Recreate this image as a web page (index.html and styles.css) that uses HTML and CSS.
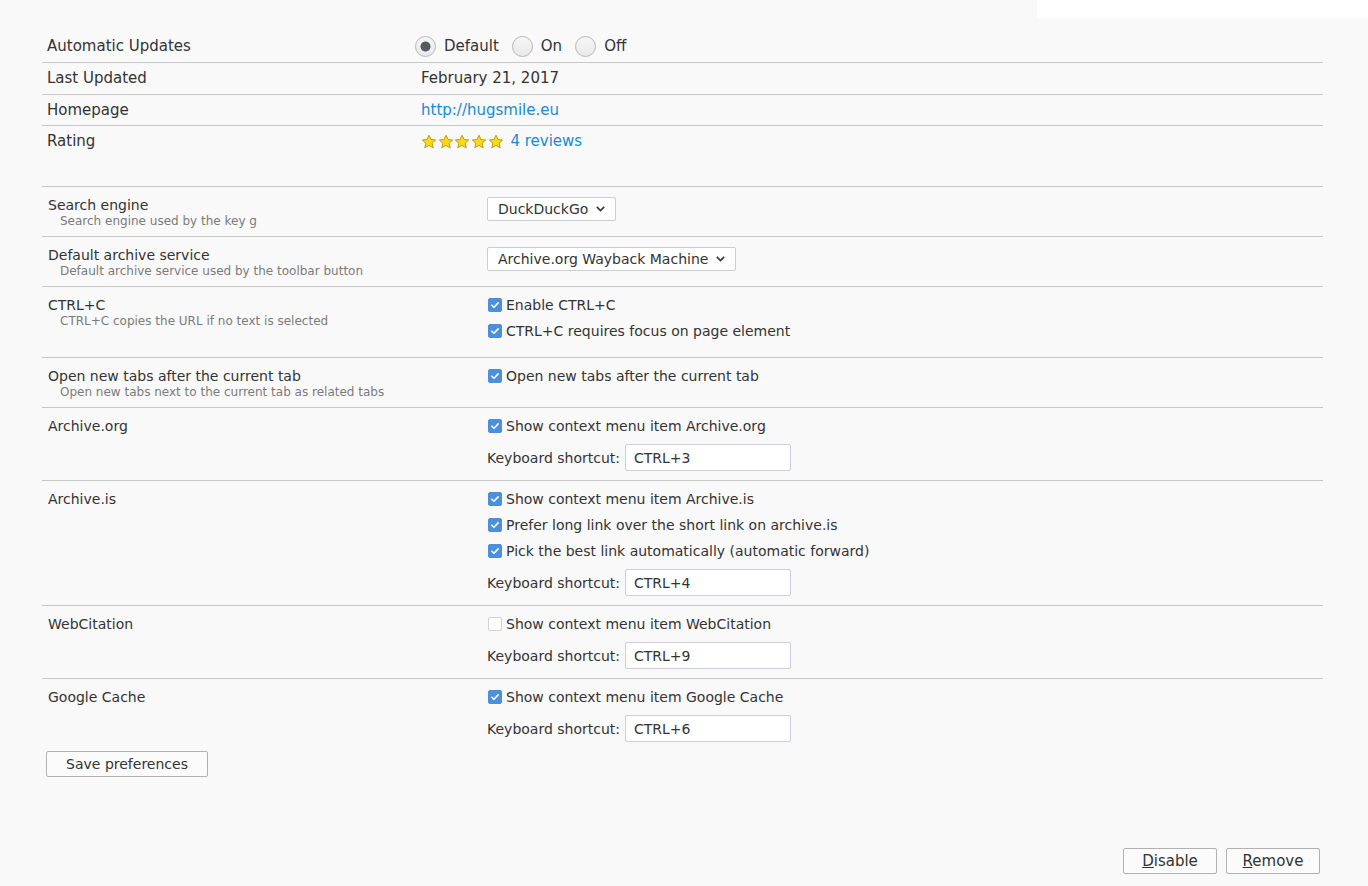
FILE: index.html
```html
<!DOCTYPE html>
<html lang="en">
<head>
<meta charset="utf-8">
<title>Add-on details</title>
<link rel="stylesheet" href="styles.css">
</head>
<body>
<div class="topbar"></div>
<main class="page">
  <section class="details">
    <div class="drow">
      <div class="dlabel">Automatic Updates</div>
      <div class="dvalue radios">
        <label class="radio-item"><input type="radio" name="upd" class="radio" checked>Default</label>
        <label class="radio-item"><input type="radio" name="upd" class="radio">On</label>
        <label class="radio-item"><input type="radio" name="upd" class="radio">Off</label>
      </div>
    </div>
    <div class="drow">
      <div class="dlabel">Last Updated</div>
      <div class="dvalue">February 21, 2017</div>
    </div>
    <div class="drow short">
      <div class="dlabel">Homepage</div>
      <div class="dvalue"><a class="link" href="#">http://hugsmile.eu</a></div>
    </div>
    <div class="drow last">
      <div class="dlabel">Rating</div>
      <div class="dvalue rating">
        <span class="stars">
          <svg class="star" viewBox="0 0 16 16"><path d="M8 1.2l2 4.3 4.7.5-3.5 3.2 1 4.6L8 11.4l-4.2 2.4 1-4.6L1.3 6l4.7-.5z"/></svg>
          <svg class="star" viewBox="0 0 16 16"><path d="M8 1.2l2 4.3 4.7.5-3.5 3.2 1 4.6L8 11.4l-4.2 2.4 1-4.6L1.3 6l4.7-.5z"/></svg>
          <svg class="star" viewBox="0 0 16 16"><path d="M8 1.2l2 4.3 4.7.5-3.5 3.2 1 4.6L8 11.4l-4.2 2.4 1-4.6L1.3 6l4.7-.5z"/></svg>
          <svg class="star" viewBox="0 0 16 16"><path d="M8 1.2l2 4.3 4.7.5-3.5 3.2 1 4.6L8 11.4l-4.2 2.4 1-4.6L1.3 6l4.7-.5z"/></svg>
          <svg class="star" viewBox="0 0 16 16"><path d="M8 1.2l2 4.3 4.7.5-3.5 3.2 1 4.6L8 11.4l-4.2 2.4 1-4.6L1.3 6l4.7-.5z"/></svg>
        </span>
        <a class="link" href="#">4 reviews</a>
      </div>
    </div>
  </section>

  <section class="options">
    <div class="orow">
      <div class="olabel">
        <div class="otitle">Search engine</div>
        <div class="odesc">Search engine used by the key g</div>
      </div>
      <div class="ocontrols">
        <span class="select-wrap">
          <select class="select"><option>DuckDuckGo</option></select>
          <svg class="chevron" viewBox="0 0 9 6"><path d="M0.8 0.8L4.5 4.5 8.2 0.8"/></svg>
        </span>
      </div>
    </div>

    <div class="orow">
      <div class="olabel">
        <div class="otitle">Default archive service</div>
        <div class="odesc">Default archive service used by the toolbar button</div>
      </div>
      <div class="ocontrols">
        <span class="select-wrap">
          <select class="select"><option>Archive.org Wayback Machine</option></select>
          <svg class="chevron" viewBox="0 0 9 6"><path d="M0.8 0.8L4.5 4.5 8.2 0.8"/></svg>
        </span>
      </div>
    </div>

    <div class="orow tall">
      <div class="olabel">
        <div class="otitle">CTRL+C</div>
        <div class="odesc">CTRL+C copies the URL if no text is selected</div>
      </div>
      <div class="ocontrols">
        <label class="check"><span class="box on"><svg viewBox="0 0 14 14"><path d="M3.3 7.2l2.5 2.5 4.9-5.2"/></svg></span>Enable CTRL+C</label>
        <label class="check"><span class="box on"><svg viewBox="0 0 14 14"><path d="M3.3 7.2l2.5 2.5 4.9-5.2"/></svg></span>CTRL+C requires focus on page element</label>
      </div>
    </div>

    <div class="orow">
      <div class="olabel">
        <div class="otitle">Open new tabs after the current tab</div>
        <div class="odesc">Open new tabs next to the current tab as related tabs</div>
      </div>
      <div class="ocontrols">
        <label class="check"><span class="box on"><svg viewBox="0 0 14 14"><path d="M3.3 7.2l2.5 2.5 4.9-5.2"/></svg></span>Open new tabs after the current tab</label>
      </div>
    </div>

    <div class="orow">
      <div class="olabel">
        <div class="otitle">Archive.org</div>
      </div>
      <div class="ocontrols">
        <label class="check"><span class="box on"><svg viewBox="0 0 14 14"><path d="M3.3 7.2l2.5 2.5 4.9-5.2"/></svg></span>Show context menu item Archive.org</label>
        <div class="shortcut"><span>Keyboard shortcut:</span><input class="text" type="text" value="CTRL+3"></div>
      </div>
    </div>

    <div class="orow">
      <div class="olabel">
        <div class="otitle">Archive.is</div>
      </div>
      <div class="ocontrols">
        <label class="check"><span class="box on"><svg viewBox="0 0 14 14"><path d="M3.3 7.2l2.5 2.5 4.9-5.2"/></svg></span>Show context menu item Archive.is</label>
        <label class="check"><span class="box on"><svg viewBox="0 0 14 14"><path d="M3.3 7.2l2.5 2.5 4.9-5.2"/></svg></span>Prefer long link over the short link on archive.is</label>
        <label class="check"><span class="box on"><svg viewBox="0 0 14 14"><path d="M3.3 7.2l2.5 2.5 4.9-5.2"/></svg></span>Pick the best link automatically (automatic forward)</label>
        <div class="shortcut"><span>Keyboard shortcut:</span><input class="text" type="text" value="CTRL+4"></div>
      </div>
    </div>

    <div class="orow">
      <div class="olabel">
        <div class="otitle">WebCitation</div>
      </div>
      <div class="ocontrols">
        <label class="check"><span class="box"></span>Show context menu item WebCitation</label>
        <div class="shortcut"><span>Keyboard shortcut:</span><input class="text" type="text" value="CTRL+9"></div>
      </div>
    </div>

    <div class="orow">
      <div class="olabel">
        <div class="otitle">Google Cache</div>
      </div>
      <div class="ocontrols">
        <label class="check"><span class="box on"><svg viewBox="0 0 14 14"><path d="M3.3 7.2l2.5 2.5 4.9-5.2"/></svg></span>Show context menu item Google Cache</label>
        <div class="shortcut"><span>Keyboard shortcut:</span><input class="text" type="text" value="CTRL+6"></div>
      </div>
    </div>
  </section>

  <div class="save-row"><button class="btn save">Save preferences</button></div>

  <footer class="footer">
    <button class="btn big"><u>D</u>isable</button>
    <button class="btn big"><u>R</u>emove</button>
  </footer>
</main>
</body>
</html>
```

FILE: styles.css
```css
html, body {
  margin: 0;
  padding: 0;
}

body {
  background: #f9f9f9;
  color: #333333;
  font-family: "DejaVu Sans", "Liberation Sans", sans-serif;
  min-height: 100vh;
  display: flex;
  flex-direction: column;
  box-sizing: border-box;
}

.topbar {
  align-self: flex-end;
  width: 331px;
  height: 18px;
  background: #ffffff;
}

.page {
  flex: 1;
  display: flex;
  flex-direction: column;
  padding: 13px 45px 12px 42px;
}

/* top details table */
.details {
  font-size: 15px;
}

.drow {
  display: grid;
  grid-template-columns: 374px 1fr;
  align-items: center;
  min-height: 31px;
  padding-left: 5px;
  border-bottom: 1px solid #c6c6c6;
  line-height: 19px;
}

.drow.short {
  min-height: 30px;
}

.drow.last {
  border-bottom: none;
  padding-top: 0;
}

.dvalue {
  display: flex;
  align-items: center;
}

.radios {
  margin-left: -6px;
}

.radio-item {
  display: inline-flex;
  align-items: center;
  margin-right: 13px;
}

.radio {
  appearance: none;
  -webkit-appearance: none;
  width: 21px;
  height: 21px;
  margin: 0 8px 0 0;
  border: 1px solid #b5b5b5;
  border-radius: 50%;
  background: linear-gradient(#f6f6f6, #e9e9e9);
  box-sizing: border-box;
  position: relative;
}

.radio:checked {
  background: radial-gradient(circle, #555a63 0, #555a63 4.6px, transparent 5.4px), linear-gradient(#f6f6f6, #e9e9e9);
}

.link {
  color: #168ad6;
  text-decoration: none;
}

.stars {
  display: inline-flex;
  margin-right: 6px;
}

.star {
  width: 16px;
  height: 16px;
  margin-right: 0.7px;
}

.star path {
  fill: #fad91c;
  stroke: #b8930a;
  stroke-width: 0.9;
  stroke-linejoin: round;
}

/* options table */
.options {
  margin-top: 29px;
  border-top: 1px solid #c6c6c6;
  font-size: 14px;
}

.orow {
  display: grid;
  grid-template-columns: 445px 1fr;
  padding: 5px 0;
  border-bottom: 1px solid #c6c6c6;
}

.orow:last-child {
  border-bottom: none;
}

.orow.tall {
  padding-bottom: 13px;
}

.olabel {
  padding: 5px 0 3px 6px;
}

.otitle {
  line-height: 17px;
}

.odesc {
  font-size: 12px;
  line-height: 14px;
  color: #7b7b7b;
  margin-left: 12px;
}

.ocontrols {
  display: flex;
  flex-direction: column;
  align-items: flex-start;
}

.select-wrap {
  position: relative;
  display: inline-block;
  margin: 5px 0;
}

.select {
  appearance: none;
  -webkit-appearance: none;
  height: 24px;
  padding: 0 26px 0 10px;
  border: 1px solid #c9cdd4;
  border-radius: 2px;
  background: #ffffff;
  color: #333333;
  font: 14px "DejaVu Sans", "Liberation Sans", sans-serif;
  display: block;
}

.chevron {
  position: absolute;
  right: 11px;
  top: 9px;
  width: 9px;
  height: 6px;
  pointer-events: none;
}

.chevron path {
  fill: none;
  stroke: #3a3a3a;
  stroke-width: 1.7;
}

.check {
  display: flex;
  align-items: center;
  height: 26px;
}

.box {
  width: 14px;
  height: 14px;
  box-sizing: border-box;
  margin: 0 4px 0 1px;
  border: 1px solid #d2d2d2;
  border-radius: 2px;
  background: #ffffff;
  display: inline-flex;
}

.box.on {
  background: #4c8fdd;
  border-color: #4c8fdd;
}

.box svg {
  width: 12px;
  height: 12px;
}

.box svg path {
  fill: none;
  stroke: #ffffff;
  stroke-width: 1.8;
  stroke-linecap: round;
  stroke-linejoin: round;
}

.shortcut {
  display: flex;
  align-items: center;
  margin: 5px 0 4px;
}

.text {
  width: 166px;
  height: 27px;
  margin-left: 5px;
  box-sizing: border-box;
  border: 1px solid #ccd0d6;
  border-radius: 2px;
  background: #ffffff;
  padding: 0 8px;
  color: #333333;
  font: 14px "DejaVu Sans", "Liberation Sans", sans-serif;
}

.btn {
  height: 26px;
  border: 1px solid #b1b1b1;
  border-radius: 2px;
  background: #fbfbfb;
  color: #333333;
  font-family: "DejaVu Sans", "Liberation Sans", sans-serif;
  padding: 0 12px;
}

.save-row {
  padding-left: 4px;
}

.save {
  width: 162px;
  font-size: 14px;
}

.footer {
  margin-top: auto;
  display: flex;
  justify-content: flex-end;
  gap: 9px;
  padding-right: 3px;
}

.big {
  min-width: 94px;
  font-size: 15px;
}
```
